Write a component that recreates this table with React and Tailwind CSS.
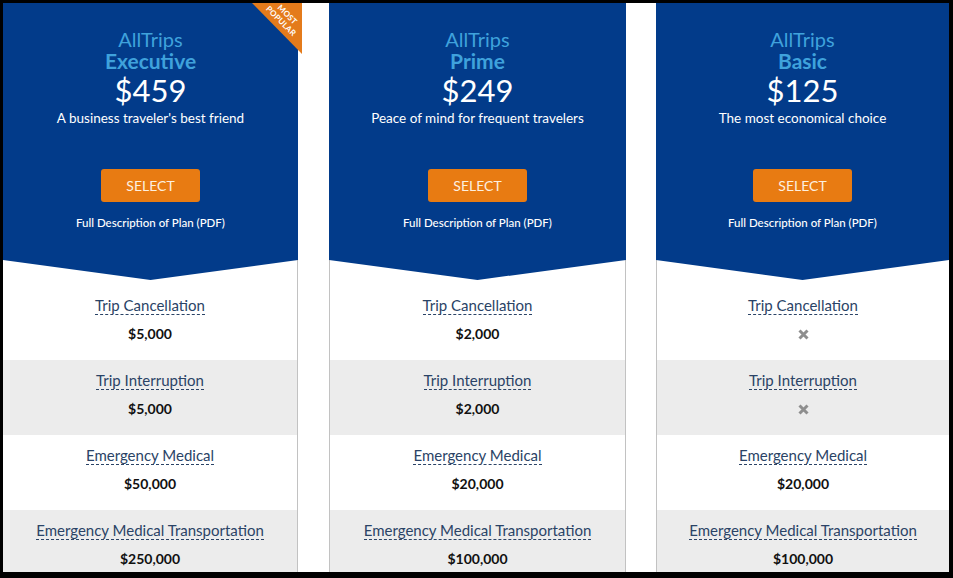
import React from "react";

const plans = [
  {
    name: "Executive",
    price: "$459",
    tagline: "A business traveler's best friend",
    popular: true,
    values: ["$5,000", "$5,000", "$50,000", "$250,000"],
    width: "w-[295px]",
    border: "border-r",
  },
  {
    name: "Prime",
    price: "$249",
    tagline: "Peace of mind for frequent travelers",
    values: ["$2,000", "$2,000", "$20,000", "$100,000"],
    width: "w-[297px]",
    border: "border-x",
  },
  {
    name: "Basic",
    price: "$125",
    tagline: "The most economical choice",
    values: [null, null, "$20,000", "$100,000"],
    width: "w-[293px]",
    border: "border-l",
  },
];

const benefits = [
  "Trip Cancellation",
  "Trip Interruption",
  "Emergency Medical",
  "Emergency Medical Transportation",
];

const Cross = () => (
  <svg width="11" height="11" viewBox="0 0 11 11">
    <path d="M1.5 1.5 L9.5 9.5 M9.5 1.5 L1.5 9.5" stroke="#8e8e8e" strokeWidth="3" />
  </svg>
);

const PopularRibbon = () => (
  <div className="absolute top-0 right-[-4px] w-[50px] h-[51px]">
    <div className="absolute inset-0 bg-[#e47b1b] [clip-path:polygon(0_0,100%_0,100%_100%)]" />
    <div className="absolute left-[2px] top-[6px] w-[60px] rotate-45 text-center text-white text-[8px] leading-[9px] font-bold tracking-[0.2px]">
      MOST
      <br />
      POPULAR
    </div>
  </div>
);

const PlanCard = ({ plan }) => {
  return (
    <div className={`relative flex flex-col shrink-0 ${plan.width}`}>
      <div className="relative shrink-0 h-[277px] bg-[#023b8a] text-center [clip-path:polygon(0_0,100%_0,100%_257px,50%_100%,0_257px)]">
        <div className="pt-[25px] flex flex-col items-center">
          <div className="text-[20px] leading-[22px] text-[#3fa2dc]">AllTrips</div>
          <div className="text-[21px] leading-[22px] font-bold text-[#3fa2dc]">{plan.name}</div>
          <div className="text-[31px] leading-[36px] text-white">{plan.price}</div>
          <div className="text-[13.5px] leading-[20px] text-white">{plan.tagline}</div>
          <button className="mt-[41px] w-[99px] h-[33px] rounded-[3px] bg-[#e87b12] text-[14px] text-[#fdf0e0]">
            SELECT
          </button>
          <div className="mt-[13px] text-[11.5px] leading-[16px] text-white font-medium">
            Full Description of Plan (PDF)
          </div>
        </div>
      </div>
      {plan.popular && <PopularRibbon />}
      <div className={`shrink-0 -mt-[20px] pt-[20px] ${plan.border} border-[#c2c2c2]`}>
        {benefits.map((b, i) => (
          <div
            key={b}
            className={`flex flex-col items-center ${i === 0 ? "h-[80px] pt-[16px]" : "h-[75px] pt-[11px]"} ${
              i % 2 === 1 ? "bg-[#ececec]" : "bg-white"
            }`}
          >
            <span className="inline-block text-[15px] leading-[18px] text-[#2a4366] border-b border-dashed border-[#2a4366]">
              {b}
            </span>
            <div className="mt-[10px] h-[18px] flex items-center justify-center text-[14px] leading-[18px] font-bold text-[#111]">
              {plan.values[i] ?? <Cross />}
            </div>
          </div>
        ))}
      </div>
    </div>
  );
};

const App = () => {
  return (
    <div
      className="w-[953px] h-[578px] bg-black pt-[3px] pl-[3px] pr-[4px] pb-[6px]"
      style={{ fontFamily: "Lato, 'Open Sans', sans-serif" }}
    >
      <div className="w-full h-full bg-white overflow-hidden flex">
        <PlanCard plan={plans[0]} />
        <div className="w-[31px] shrink-0" />
        <PlanCard plan={plans[1]} />
        <div className="w-[30px] shrink-0" />
        <PlanCard plan={plans[2]} />
      </div>
    </div>
  );
};

export default App;
